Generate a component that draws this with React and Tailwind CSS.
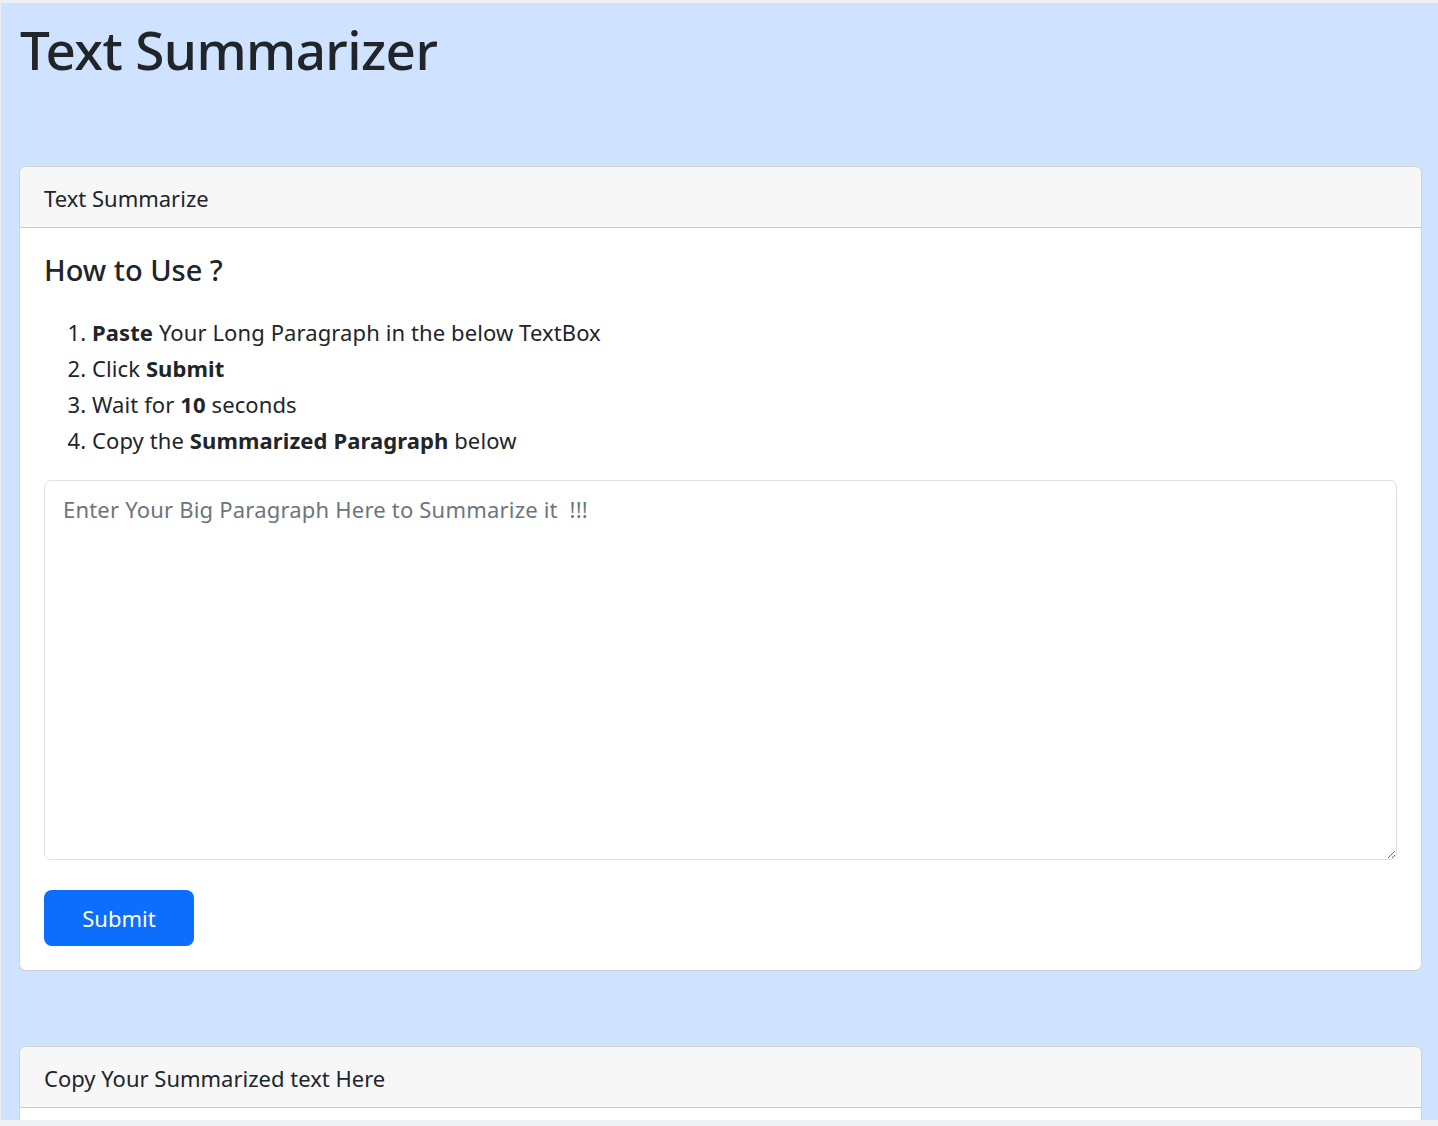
import { useState } from 'react';

const steps = [
  [<b key="a">Paste</b>, ' Your Long Paragraph in the below TextBox'],
  ['Click ', <b key="b">Submit</b>],
  ['Wait for ', <b key="c">10</b>, ' seconds'],
  ['Copy the ', <b key="d">Summarized Paragraph</b>, ' below'],
];

const App = () => {
  const [text, setText] = useState('');

  return (
    <div className="min-h-[1126px] bg-[#eef0f3] pt-[3px] pl-[1px] pb-[6px] font-['Noto_Sans',sans-serif] text-[#212529]">
      <div className="h-[1117px] overflow-hidden bg-[#cfe2ff] pl-[18px] pr-[16px]">
        <h1 className="pt-[13px] pb-[83px] pl-[1px] text-[53px] font-medium leading-[67px] tracking-[-0.6px]">Text Summarizer</h1>

        <div className="bg-white border border-black/[0.175] rounded-[7px] overflow-hidden">
          <div className="bg-[#f7f7f7] border-b border-black/[0.175] px-6 h-[61px] flex items-center pt-[2px] text-[22px]">Text Summarize</div>
          <div className="p-6">
            <h3 className="text-[29px] font-medium leading-[34px] mt-[1px] mb-[27px]">How to Use ?</h3>
            <ol className="list-decimal pl-[48px] text-[22px] leading-[36px] mb-[22px] tracking-[0.1px]">
              {steps.map((s, i) => <li key={i}>{s}</li>)}
            </ol>
            <textarea
              value={text}
              onChange={e => setText(e.target.value)}
              placeholder="Enter Your Big Paragraph Here to Summarize it  !!!"
              className="block w-full h-[380px] border border-[#dee2e6] rounded-[7px] px-[18px] py-[13px] text-[22px] leading-[30px] tracking-[0.2px] placeholder:text-[#6c757d] focus:outline-none"
            />
            <button className="mt-[30px] w-[150px] h-[56px] bg-[#0d6efd] hover:bg-[#0b5ed7] text-white text-[22px] rounded-[8px]">Submit</button>
          </div>
        </div>

        <div className="mt-[75px] bg-white border border-black/[0.175] rounded-[7px] overflow-hidden">
          <div className="bg-[#f7f7f7] border-b border-black/[0.175] px-6 h-[61px] flex items-center pt-[2px] text-[22px]">Copy Your Summarized text Here</div>
          <div className="h-[40px]" />
        </div>
      </div>
    </div>
  );
};

export default App;
